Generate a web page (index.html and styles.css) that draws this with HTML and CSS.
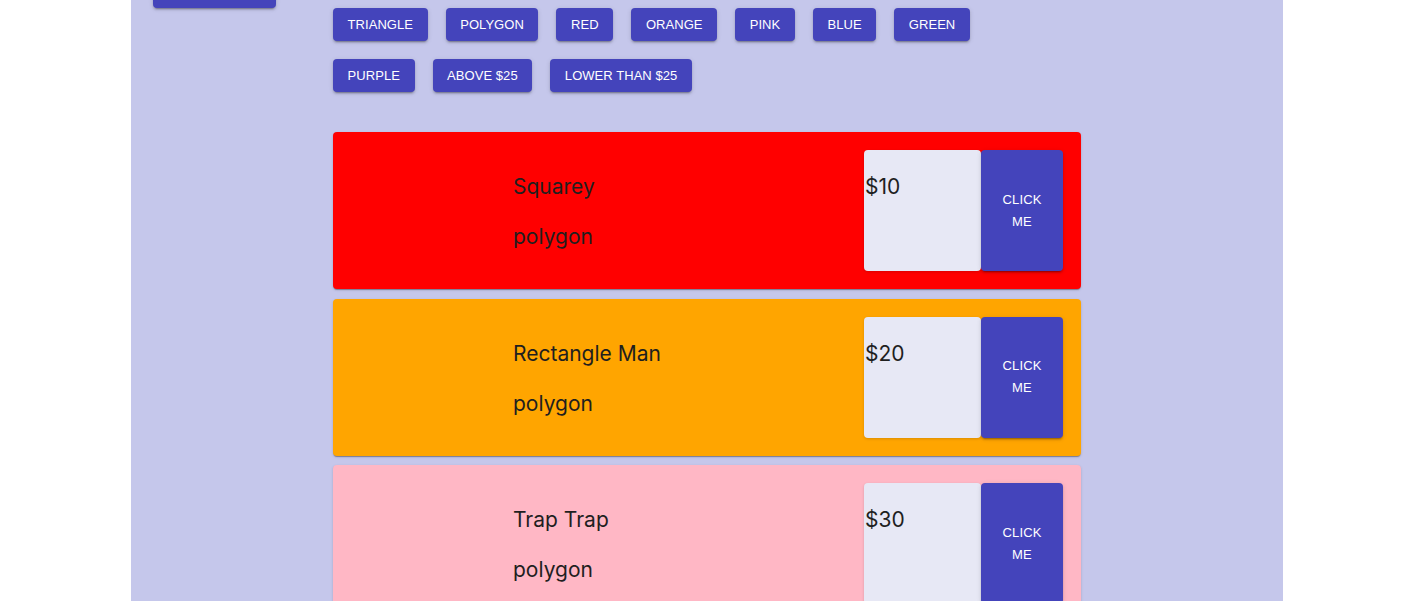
FILE: index.html
```html
<!DOCTYPE html>
<html>
<head>
<meta charset="utf-8">
<link rel="stylesheet" href="styles.css">
</head>
<body>
<div class="page">
  <aside class="sidebar">
    <button class="btn side-btn" aria-label="Reset"></button>
  </aside>
  <main class="main">
    <div class="filters">
      <button class="btn">TRIANGLE</button>
      <button class="btn">POLYGON</button>
      <button class="btn">RED</button>
      <button class="btn">ORANGE</button>
      <button class="btn">PINK</button>
      <button class="btn">BLUE</button>
      <button class="btn">GREEN</button>
    </div>
    <div class="filters">
      <button class="btn">PURPLE</button>
      <button class="btn">ABOVE $25</button>
      <button class="btn">LOWER THAN $25</button>
    </div>
    <div class="cards">
      <div class="card red">
        <div class="thumb"></div>
        <div class="info">
          <p>Squarey</p>
          <p>polygon</p>
        </div>
        <div class="price"><p>$10</p></div>
        <button class="click">CLICK<br>ME</button>
      </div>
      <div class="card orange">
        <div class="thumb"></div>
        <div class="info">
          <p>Rectangle Man</p>
          <p>polygon</p>
        </div>
        <div class="price"><p>$20</p></div>
        <button class="click">CLICK<br>ME</button>
      </div>
      <div class="card pink">
        <div class="thumb"></div>
        <div class="info">
          <p>Trap Trap</p>
          <p>polygon</p>
        </div>
        <div class="price"><p>$30</p></div>
        <button class="click">CLICK<br>ME</button>
      </div>
    </div>
  </main>
</div>
</body>
</html>
```
FILE: styles.css
```css
html, body {
  margin: 0;
  padding: 0;
  background: #ffffff;
  overflow: hidden;
}
.page {
  margin-left: 131px;
  width: 1152px;
  min-height: 601px;
  background: #c5c7eb;
  display: flex;
  align-items: flex-start;
}
.sidebar {
  width: 202px;
  padding-left: 22px;
  box-sizing: border-box;
  flex: none;
}
.main {
  padding-top: 8px;
  width: 748px;
}
.filters {
  display: flex;
  gap: 18px;
  margin-bottom: 18px;
}
.btn {
  display: block;
  height: 33px;
  padding: 0 14.6px;
  border: none;
  border-radius: 4px;
  background: #4444bb;
  color: #ffffff;
  font-family: "Liberation Sans", Arial, sans-serif;
  font-size: 13px;
  letter-spacing: 0.05px;
  box-shadow: 0 3px 1px -2px rgba(0,0,0,.2), 0 2px 2px 0 rgba(0,0,0,.14), 0 1px 5px 0 rgba(0,0,0,.12);
}
.side-btn {
  width: 123px;
  margin-top: -25px;
}
.cards {
  margin-top: 40px;
  display: flex;
  flex-direction: column;
  gap: 9.5px;
}
.card {
  height: 157px;
  box-sizing: border-box;
  padding: 18px;
  border-radius: 4px;
  display: flex;
  box-shadow: 0 2px 1px -1px rgba(0,0,0,.2), 0 1px 1px 0 rgba(0,0,0,.14), 0 1px 3px 0 rgba(0,0,0,.12);
  font-family: Inter, "Noto Sans", sans-serif;
  color: #1f1f1f;
}
.red { background: #ff0000; }
.orange { background: #ffa500; }
.pink { background: #ffb7c5; }
.thumb {
  width: 162px;
  flex: none;
}
.info {
  flex: 1;
}
.info p, .price p {
  margin: 24px 0;
  font-size: 21px;
  line-height: 26px;
}
.price {
  width: 117px;
  flex: none;
  background: #e7e8f5;
  border-radius: 4px;
  box-shadow: 0 1px 3px rgba(0,0,0,.15);
}
.price p {
  padding-left: 1px;
}
.click {
  width: 82px;
  flex: none;
  border: none;
  border-radius: 4px;
  background: #4444bb;
  color: #ffffff;
  font-family: "Liberation Sans", Arial, sans-serif;
  font-size: 13px;
  line-height: 22px;
  letter-spacing: 0.15px;
  box-shadow: 0 3px 1px -2px rgba(0,0,0,.2), 0 2px 2px 0 rgba(0,0,0,.14), 0 1px 5px 0 rgba(0,0,0,.12);
}
```
